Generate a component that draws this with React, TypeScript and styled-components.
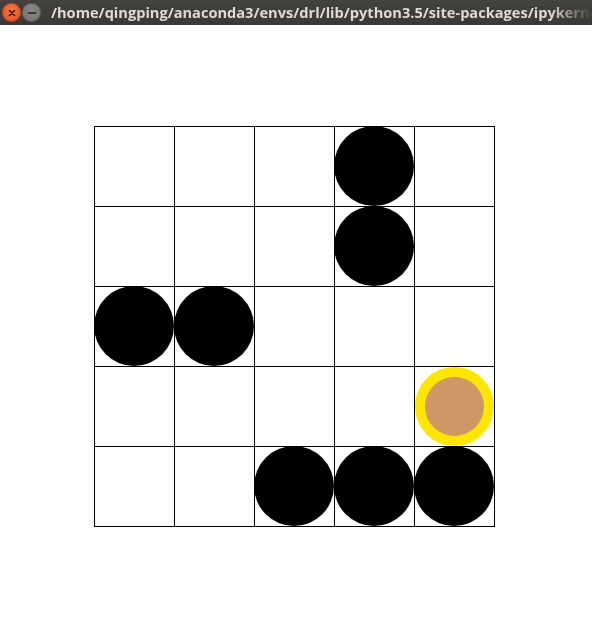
import React from "react";
import styled, { createGlobalStyle } from "styled-components";

const Global = createGlobalStyle`
  html, body { margin: 0; padding: 0; background: #ffffff; }
  body { width: 592px; height: 623px; overflow: hidden; }
`;

const Window = styled.div`
  width: 592px;
  height: 623px;
  display: flex;
  flex-direction: column;
  background: #ffffff;
`;

const TitleBar = styled.div`
  height: 25px;
  flex: none;
  display: flex;
  align-items: center;
  padding-left: 2px;
  background: linear-gradient(#43423e, #3a3935);
  overflow: hidden;
`;

const WinButton = styled.div<{ $kind: "close" | "min" }>`
  width: 19px;
  height: 19px;
  border-radius: 50%;
  margin-right: 1px;
  flex: none;
  display: flex;
  align-items: center;
  justify-content: center;
  background: ${(p) =>
    p.$kind === "close"
      ? "radial-gradient(circle at 50% 40%, #f3774a, #df4b16)"
      : "radial-gradient(circle at 50% 40%, #8a8985, #6f6e6a)"};
  box-shadow: inset 0 0 0 1px rgba(0, 0, 0, 0.2);
`;

const Title = styled.div`
  margin-left: 9px;
  font-family: "Open Sans", "DejaVu Sans", sans-serif;
  font-weight: 700;
  font-size: 14.6px;
  line-height: 25px;
  color: #dfdbd2;
  white-space: nowrap;
  flex: 1;
  overflow: hidden;
  -webkit-mask-image: linear-gradient(to right, #000 0, #000 498px, transparent 542px);
  mask-image: linear-gradient(to right, #000 0, #000 498px, transparent 542px);
`;

const Stage = styled.div`
  flex: 1;
  padding-top: 101px;
  padding-left: 94px;
`;

const Board = styled.div`
  display: grid;
  grid-template-columns: repeat(5, 80px);
  grid-template-rows: repeat(5, 80px);
  width: 400px;
  border-left: 1px solid #000;
  border-top: 1px solid #000;
`;

const Cell = styled.div`
  position: relative;
  box-sizing: border-box;
  border-right: 1px solid #000;
  border-bottom: 1px solid #000;
`;

const Piece = styled.div<{ $kind: "wall" | "agent" }>`
  position: absolute;
  z-index: 1;
  box-sizing: border-box;
  border-radius: 50%;
  ${(p) =>
    p.$kind === "wall"
      ? `left: -1px; top: -1px; width: 80px; height: 80px; background: #000;`
      : `left: 0px; top: 0px; width: 79px; height: 79px; background: #cc9966; border: 10px solid #ffe600;`}
`;

const walls = new Set(["0,3", "1,3", "2,0", "2,1", "4,2", "4,3", "4,4"]);
const agent = "3,4";

export default function App() {
  const cells = [];
  for (let r = 0; r < 5; r++) {
    for (let c = 0; c < 5; c++) {
      const key = `${r},${c}`;
      cells.push(
        <Cell key={key}>
          {walls.has(key) && <Piece $kind="wall" />}
          {key === agent && <Piece $kind="agent" />}
        </Cell>
      );
    }
  }
  return (
    <>
      <Global />
      <Window>
        <TitleBar>
          <WinButton $kind="close">
            <svg width="8" height="8" viewBox="0 0 8 8">
              <path d="M1.5 1.5 L6.5 6.5 M6.5 1.5 L1.5 6.5" stroke="#4a1a08" strokeWidth="1.6" strokeLinecap="round" />
            </svg>
          </WinButton>
          <WinButton $kind="min">
            <svg width="10" height="4" viewBox="0 0 10 4">
              <path d="M1.5 2 H8.5" stroke="#3b3a36" strokeWidth="1.8" strokeLinecap="round" />
            </svg>
          </WinButton>
          <Title>/home/qingping/anaconda3/envs/drl/lib/python3.5/site-packages/ipykernel</Title>
        </TitleBar>
        <Stage>
          <Board>{cells}</Board>
        </Stage>
      </Window>
    </>
  );
}
